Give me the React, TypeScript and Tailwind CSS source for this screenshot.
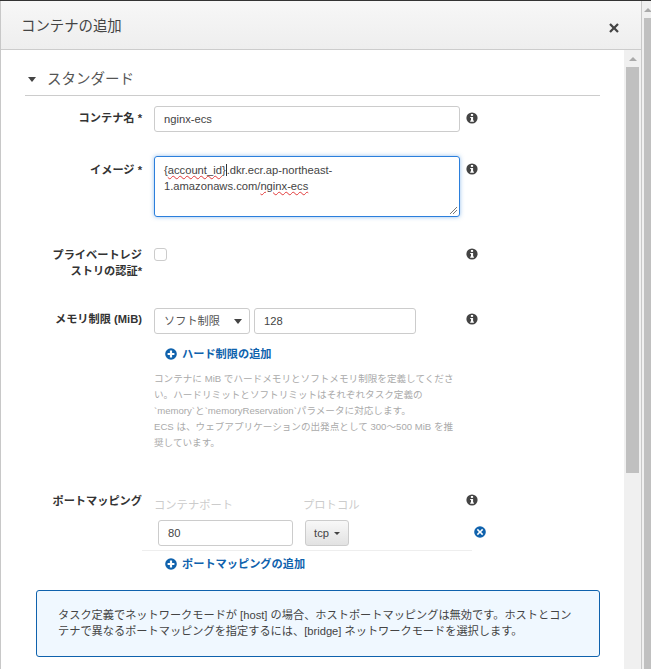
const sans = "font-['Liberation_Sans','Noto_Sans_CJK_JP',sans-serif]";

const InfoIcon = () => (
  <svg viewBox="0 0 12 12" className="w-[12px] h-[12px] shrink-0">
    <circle cx="6" cy="6" r="5.6" fill="#444444" />
    <rect x="4.9" y="2" width="2.2" height="1.9" fill="#ffffff" />
    <path d="M4.2 4.9h2.9v3.6h.8v1.2H4.2V8.5h.8V6.1h-.8z" fill="#ffffff" />
  </svg>
);

const PlusIcon = () => (
  <svg viewBox="0 0 12 12" className="w-[12px] h-[12px] shrink-0">
    <circle cx="6" cy="6" r="5.8" fill="#0f62ad" />
    <path d="M2.6 4.9h2.3V2.6h2.2v2.3h2.3v2.2H7.1v2.3H4.9V7.1H2.6z" fill="#ffffff" />
  </svg>
);

const RemoveIcon = () => (
  <svg viewBox="0 0 12 12" className="w-[12px] h-[12px] shrink-0">
    <circle cx="6" cy="6" r="5.8" fill="#0f62ad" />
    <path d="M3.9 2.8 6 4.9l2.1-2.1 1.1 1.1L7.1 6l2.1 2.1-1.1 1.1L6 7.1 3.9 9.2 2.8 8.1 4.9 6 2.8 3.9z" fill="#ffffff" />
  </svg>
);

const Label = ({ children }: { children: React.ReactNode }) => (
  <div className="w-[117px] shrink-0 text-right text-[11.2px] leading-[16px] font-bold text-[#333333]">{children}</div>
);

const inputClass = "h-[26px] shrink-0 border border-[#cccccc] rounded-[3px] bg-white px-[8px] text-[11.2px] text-[#444444] flex items-center";

export default function App() {
  return (
    <div className={`${sans} relative w-[651px] h-[669px] overflow-hidden bg-[#f0f0f0] flex flex-col`}>
      <div className="h-[1px] bg-[#333333]" />
      <div className="flex-1 flex min-h-0">
        <div className="w-[642px] border-l border-r border-[#c8c8c8] flex flex-col min-h-0 bg-white">
          <div className="h-[49px] flex items-center justify-between pl-[20px] pr-[22px] pt-[3px] bg-gradient-to-b from-[#f7f7f7] to-[#eeeeee] border-b border-[#cccccc] shrink-0">
            <span className="text-[14.4px] text-[#444444]">コンテナの追加</span>
            <svg viewBox="0 0 10 10" className="w-[10px] h-[10px] mt-[2px]">
              <path d="M1.8 0.2 5 3.4 8.2 0.2 9.8 1.8 6.6 5 9.8 8.2 8.2 9.8 5 6.6 1.8 9.8 0.2 8.2 3.4 5 0.2 1.8z" fill="#444444" />
            </svg>
          </div>
          <div className="flex-1 flex min-h-0">
            <div className="flex-1 min-w-0 pl-[24px] pr-[24px]">
              <div className="h-[46px] flex items-end border-b border-[#cccccc] pb-[6px]">
                <span className="w-0 h-0 border-x-[4px] border-x-transparent border-t-[5px] border-t-[#444444] ml-[3px] mb-[7px]" />
                <span className="ml-[11px] text-[14.5px] leading-[20px] text-[#555555]">スタンダード</span>
              </div>
              <div className="flex mt-[10px] h-[26px]">
                <div className="pt-[4px]"><Label>コンテナ名 *</Label></div>
                <div className={`${inputClass} pl-[9px] ml-[12px] w-[306px]`}>nginx-ecs</div>
                <div className="ml-[6px] pt-[6px]"><InfoIcon /></div>
              </div>
              <div className="flex mt-[24px] h-[61px]">
                <div className="pt-[6px]"><Label>イメージ *</Label></div>
                <div className="relative ml-[12px] w-[306px] h-[61px] shrink-0 border border-[#2b7fdc] rounded-[3px] shadow-[0_0_4px_rgba(43,127,220,0.5)] pl-[9px] pr-[8px] py-[5px] text-[11.2px] leading-[16px] text-[#444444]">
                  <div>
                    {"{"}<span className="underline decoration-wavy decoration-[#e23a3a] decoration-[1px]">account_id</span>{"}"}<span className="border-l border-[#333333]" />.dkr.ecr.ap-northeast-
                  </div>
                  <div>
                    1.amazonaws.com/<span className="underline decoration-wavy decoration-[#e23a3a] decoration-[1px]">nginx-ecs</span>
                  </div>
                  <svg viewBox="0 0 9 9" className="absolute right-[1px] bottom-[1px] w-[9px] h-[9px]">
                    <path d="M1 8 8 1M4 8l4-4" stroke="#555555" strokeWidth="0.8" />
                  </svg>
                </div>
                <div className="ml-[6px] pt-[7px]"><InfoIcon /></div>
              </div>
              <div className="flex mt-[30px] h-[48px]">
                <Label>プライベートレジ<br />ストリの認証*</Label>
                <div className="ml-[12px] mt-[1px] w-[13px] h-[13px] shrink-0 border border-[#cccccc] rounded-[3px]" />
                <div className="ml-[299px] mt-[1px]"><InfoIcon /></div>
              </div>
              <div className="flex mt-[13px] h-[26px]">
                <div className="pt-[3px]"><Label>メモリ制限 (MiB)</Label></div>
                <div className={`${inputClass} pl-[9px] ml-[12px] w-[96px] justify-between pr-[7px]`}>
                  <span className="text-[#555555]">ソフト制限</span>
                  <span className="w-0 h-0 border-x-[4px] border-x-transparent border-t-[5px] border-t-[#444444]" />
                </div>
                <div className={`${inputClass} pl-[9px] ml-[4px] w-[162px]`}>128</div>
                <div className="ml-[50px] pt-[5px]"><InfoIcon /></div>
              </div>
              <div className="ml-[140px] mt-[12px] flex items-center gap-[5px] text-[11.2px] leading-[16px] font-bold text-[#0f62ad]">
                <PlusIcon />
                ハード制限の追加
              </div>
              <div className="ml-[129px] mt-[9px] w-[302px] text-[9.6px] leading-[16px] text-[#aaaaaa]">
                <p>コンテナに MiB でハードメモリとソフトメモリ制限を定義してください。ハードリミットとソフトリミットはそれぞれタスク定義の `memory`と`memoryReservation`パラメータに対応します。</p>
                <p>ECS は、ウェブアプリケーションの出発点として 300〜500 MiB を推奨しています。</p>
              </div>
              <div className="flex mt-[42px] h-[20px]">
                <Label>ポートマッピング</Label>
                <div className="ml-[12px] mt-[4px] w-[149px] shrink-0 text-[11.3px] leading-[16px] text-[#cccccc]">コンテナポート</div>
                <div className="mt-[4px] w-[163px] shrink-0 text-[11.3px] leading-[16px] text-[#cccccc]">プロトコル</div>
                <div className="mt-[1px]"><InfoIcon /></div>
              </div>
              <div className="ml-[117px] w-[330px] h-[32px] mt-[6px] border-b border-[#eeeeee] flex items-start pl-[16px] pt-[1px]">
                <div className={`${inputClass} pl-[9px] w-[135px]`}>80</div>
                <div className="ml-[12px] w-[44px] h-[26px] shrink-0 border border-[#cccccc] rounded-[3px] bg-gradient-to-b from-[#f8f8f8] to-[#e2e2e2] flex items-center justify-center gap-[5px] text-[11.2px] text-[#444444]">
                  tcp
                  <span className="w-0 h-0 border-x-[3px] border-x-transparent border-t-[3px] border-t-[#444444]" />
                </div>
                <div className="ml-[125px] mt-[6px] shrink-0"><RemoveIcon /></div>
              </div>
              <div className="ml-[140px] mt-[5px] flex items-center gap-[5px] text-[11.2px] leading-[16px] font-bold text-[#0f62ad]">
                <PlusIcon />
                ポートマッピングの追加
              </div>
              <div className="ml-[11px] mt-[18px] w-[564px] h-[67px] border border-[#0f62ad] rounded-[3px] bg-[#f0f8ff] px-[21px] pt-[16px] text-[11.2px] leading-[16px] text-[#444444]">
                タスク定義でネットワークモードが [host] の場合、ホストポートマッピングは無効です。ホストとコンテナで異なるポートマッピングを指定するには、[bridge] ネットワークモードを選択します。
              </div>
            </div>
            <div className="w-[17px] shrink-0 bg-[#f0f0f0] flex flex-col">
              <div className="h-[17px] flex items-center justify-center">
                <span className="w-0 h-0 border-x-[4px] border-x-transparent border-b-[4px] border-b-[#aaaaaa]" />
              </div>
              <div className="mx-[2px] h-[406px] bg-[#c0c0c0]" />
            </div>
          </div>
        </div>
        <div className="flex-1 flex flex-col pl-[2px]">
          <div className="h-[17px] flex items-center justify-center">
            <span className="w-0 h-0 border-x-[4px] border-x-transparent border-b-[4px] border-b-[#aaaaaa]" />
          </div>
          <div className="flex-1 bg-[#c0c0c0]" />
        </div>
      </div>
    </div>
  );
}
